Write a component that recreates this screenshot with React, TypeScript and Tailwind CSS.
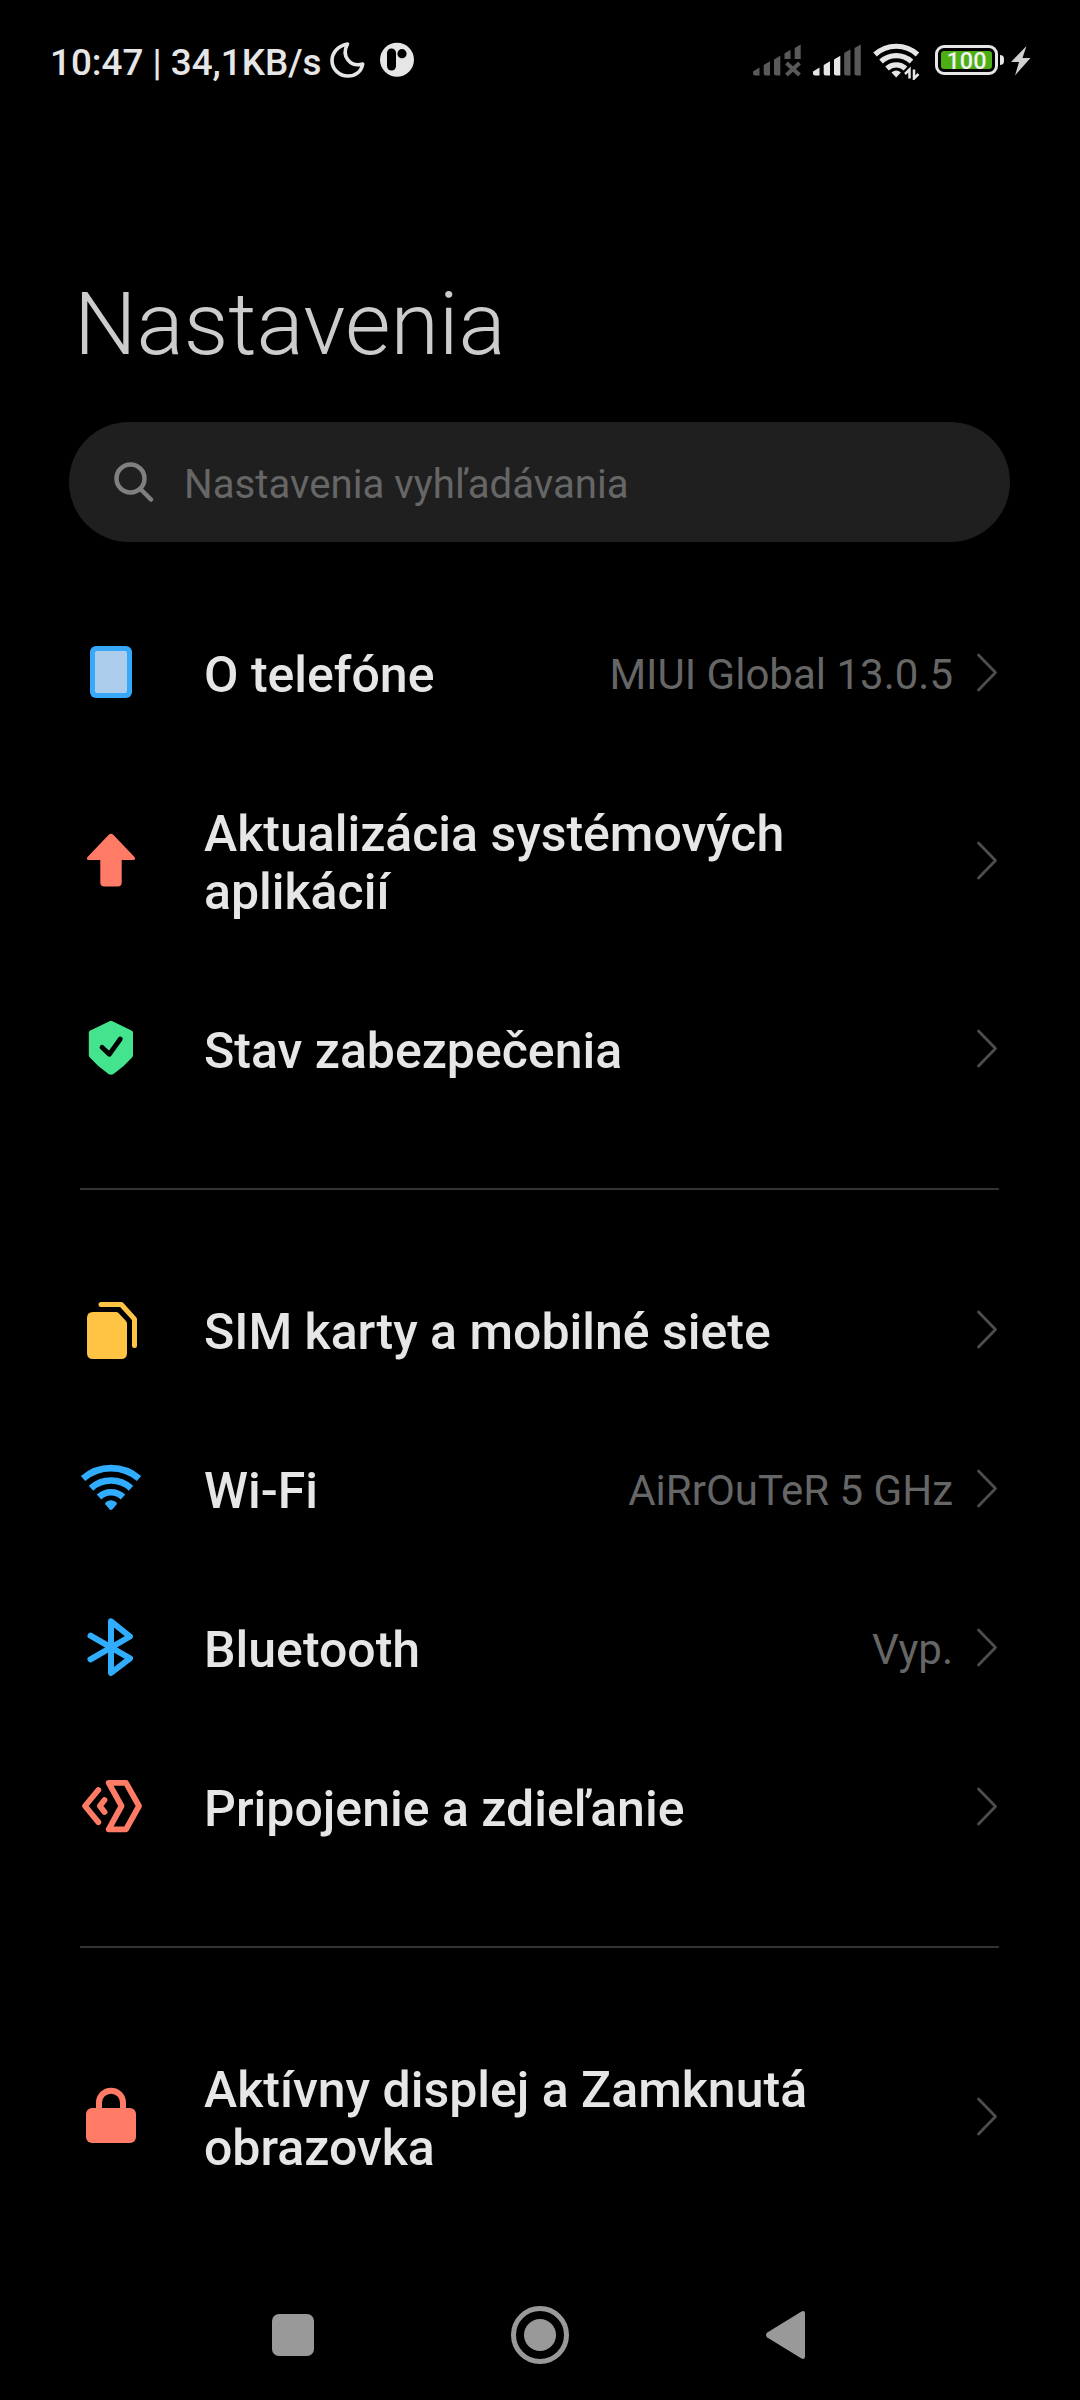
import type { ReactNode } from "react";

type Item = {
  label: ReactNode;
  value?: string;
  icon: ReactNode;
};

function RowIcon({ children, top = 0 }: { children: ReactNode; top?: number }) {
  return (
    <svg width="64" height="63" viewBox={`0 ${-top} 64 63`} fill="none" className="shrink-0">
      {children}
    </svg>
  );
}

const PhoneIcon = () => (
  <RowIcon>
    <rect x="11" y="5" width="42" height="52" rx="6" fill="#37a9f8" />
    <rect x="16" y="10" width="32" height="42" rx="2" fill="#adcdec" />
  </RowIcon>
);

const UpdateIcon = () => (
  <RowIcon>
    <path
      d="M30 5.6q2-1.8 4 0L55.5 28q1.800 2.800-1.300 3H42.700V53.500q0 4-4 4H25.300q-4 0-4-4V31H9.800q-3.100-.2-1.300-3z"
      fill="#ff7b66"
    />
  </RowIcon>
);

const ShieldIcon = () => (
  <RowIcon>
    <path
      d="M30.500 4.200q1.500-.8 3 0L53 13.800q1 .5 1 1.700V38q0 1.600-1 2.600Q45 50 34.500 57q-2.500 1.600-5 0Q19 50 10.800 40.600q-1-1-1-2.600V15.500q0-1.200 1-1.700z"
      fill="#44e48e"
    />
    <path
      d="M23 30.300l7.300 7L41.300 22"
      stroke="#000"
      strokeWidth="4.800"
      strokeLinecap="round"
      strokeLinejoin="round"
    />
  </RowIcon>
);

const SimIcon = () => (
  <RowIcon top={1}>
    <path d="M14 13H37q1.500 0 2.500 1l7.500 8q1 1 1 2.500V54q0 6-6 6H14q-6 0-6-6V19q0-6 6-6z" fill="#ffc443" />
    <path
      d="M22 5.500H42.300L55.500 20.200V46.500"
      stroke="#ffc443"
      strokeWidth="5"
      strokeLinecap="round"
      strokeLinejoin="round"
    />
  </RowIcon>
);

const WifiIcon = () => (
  <RowIcon top={1}>
    <g stroke="#30adff" strokeWidth="6.600">
      <path d="M4 20.600a42.700 42.700 0 0 1 56 0" />
      <path d="M12 30.200a30 30 0 0 1 40 0" />
      <path d="M20 39a17.500 17.500 0 0 1 24 0" />
    </g>
    <path d="M26.500 46.500q-1-1.500.5-2.600 5-3.400 10 0 1.500 1.100.5 2.600l-4 4.700q-1.500 1.400-3 0z" fill="#30adff" />
  </RowIcon>
);

const BluetoothIcon = () => (
  <RowIcon top={1}>
    <path
      d="M11.500 18.700L51 41.300 32 56V4.300L51 19.500 11.500 42.300"
      stroke="#30adff"
      strokeWidth="6"
      strokeLinecap="round"
      strokeLinejoin="round"
    />
  </RowIcon>
);

const ShareIcon = () => (
  <RowIcon top={1}>
    <g stroke="#ff7b66" strokeWidth="5.800" strokeLinecap="round" strokeLinejoin="round">
      <path d="M19.300 14L6 30l13.300 16.200" />
      <path d="M25.500 24L20.800 30l4.700 6" />
      <path d="M29.700 6.800H47L60 30 47 53.300H29.700L42.500 30z" />
    </g>
  </RowIcon>
);

const LockIcon = () => (
  <RowIcon top={2}>
    <rect x="7" y="21" width="50" height="35" rx="6" fill="#ff7b66" />
    <path d="M20 23V15.700a12 12 0 0 1 24 0V23" stroke="#ff7b66" strokeWidth="6" />
  </RowIcon>
);

const sections: Item[][] = [
  [
    { label: "O telefóne", value: "MIUI Global 13.0.5", icon: <PhoneIcon /> },
    {
      label: (
        <>
          Aktualizácia systémových
          <br />
          aplikácií
        </>
      ),
      icon: <UpdateIcon />,
    },
    { label: "Stav zabezpečenia", icon: <ShieldIcon /> },
  ],
  [
    { label: "SIM karty a mobilné siete", icon: <SimIcon /> },
    { label: "Wi-Fi", value: "AiRrOuTeR 5 GHz", icon: <WifiIcon /> },
    { label: "Bluetooth", value: "Vyp.", icon: <BluetoothIcon /> },
    { label: "Pripojenie a zdieľanie", icon: <ShareIcon /> },
  ],
  [
    {
      label: (
        <>
          Aktívny displej a Zamknutá
          <br />
          obrazovka
        </>
      ),
      icon: <LockIcon />,
    },
  ],
];

function Row({ label, value, icon }: Item) {
  return (
    <div className="flex items-center py-12 pr-[82px] pl-[79px]">
      {icon}
      <div className="ml-[61px] flex-1 pt-[5px] text-[50px] leading-[58px] font-medium whitespace-nowrap text-[#e6e6e6]">
        {label}
      </div>
      {value && <div className="pt-[5px] text-[42px] leading-[50px] whitespace-nowrap text-[#666]">{value}</div>}
      <svg width="22" height="39" viewBox="0 0 22 39" fill="none" className="ml-[23px] shrink-0">
        <path
          d="M2.500 2L19.500 19.500 2.500 37"
          stroke="#4d4d4d"
          strokeWidth="2.800"
          strokeLinecap="round"
          strokeLinejoin="round"
        />
      </svg>
    </div>
  );
}

function StatusBar() {
  return (
    <div className="flex h-[120px] items-center pr-[49px] pl-[50px] text-[#e6e6e6]">
      <span className="w-[280px] pt-1.5 text-[36.800px] leading-10 font-medium whitespace-nowrap">10:47 | 34,1KB/s</span>
      {/* do not disturb */}
      <svg width="35" height="40" viewBox="0 0 35 40" fill="none">
        <path
          d="M17.500 4C8 6 2 12.500 2 20.500 2 29.500 9.500 36 18 36 25.500 36 31.500 31.500 32.700 24 21 27.500 10.500 17 17.500 4Z"
          stroke="currentColor"
          strokeWidth="3.600"
          strokeLinejoin="round"
        />
      </svg>
      <svg width="34" height="40" viewBox="0 0 34 40" className="ml-[15px]">
        <circle cx="17" cy="19.700" r="17" fill="currentColor" />
        <rect x="7" y="8.500" width="9" height="22" rx="4.500" />
        <circle cx="22" cy="13.700" r="4.600" />
      </svg>

      {/* SIM 1, no service */}
      <svg width="48" height="40" viewBox="0 0 48 40" className="ml-auto" fill="#595959">
        <path d="M0 31.500l6.500-4V35.500H2q-2 0-2-2z" />
        <path d="M10.700 25l6.300-3.800V35.500h-4.300q-2 0-2-2z" />
        <path d="M21 19.500l6.300-3.800V35.500H23q-2 0-2-2z" />
        <path d="M31.500 13.500l6-3.800V19h-6z" />
        <path d="M41.700 8l6-3.500V19h-6z" />
        <path d="M33.500 23l13 12M46.500 23l-13 12" stroke="#595959" strokeWidth="4" />
      </svg>
      <svg width="48" height="40" viewBox="0 0 48 40" className="ml-3" fill="currentColor">
        <path d="M0 31.500l6.500-4V35.500H2q-2 0-2-2z" />
        <path d="M10.700 25l6.300-3.800V35.500h-4.300q-2 0-2-2z" />
        <path d="M21 19.500l6.300-3.800V35.500H23q-2 0-2-2z" />
        <path d="M31.200 13l6.300-3.800V35.500h-4.300q-2 0-2-2z" fill="#595959" />
        <path d="M41.500 8l6.300-3.500V35.500h-4.300q-2 0-2-2z" fill="#595959" />
      </svg>
      <svg width="47" height="40" viewBox="0 0 47 40" className="ml-3" fill="none">
        <g stroke="currentColor" strokeWidth="5.200">
          <path d="M2 14.500a31.500 31.500 0 0 1 42.500 0" />
          <path d="M8 21.500a22.500 22.500 0 0 1 30.500 0" />
          <path d="M14 28.500a13.500 13.500 0 0 1 18.500 0" />
        </g>
        <path d="M18.500 32.500q4.700-4 9.400 0l-4.700 5z" fill="currentColor" />
        <path d="M36.500 38.500V29.500l-4.500 4.500M41 29.500v9l4.500-4.500" stroke="currentColor" strokeWidth="2.500" />
      </svg>
      <div className="ml-[15px] flex h-[30px] w-[63px] rounded-[9px] border-[3px] border-[#e6e6e6] p-[3px]">
        <span className="flex flex-1 items-center justify-center rounded-[3px] bg-[#4caf16] pt-[3px] text-[23.500px] leading-none font-medium text-[#f2f2f2]">
          100
        </span>
      </div>
      <div className="ml-0.5 h-2.5 w-1 rounded-r-sm bg-[#e6e6e6]" />
      <svg width="20" height="40" viewBox="0 0 20 40" className="ml-[7px]" fill="#d0d0d0">
        <path d="M15.500 6L0 22h8L4 35.500 19.500 18h-8z" />
      </svg>
    </div>
  );
}

function NavBar() {
  return (
    <div className="flex h-[130px] shrink-0 items-center pl-[272px]">
      <div className="h-[42px] w-[42px] rounded-[7px] bg-[#999]" />
      <div className="ml-[197px] flex h-[58px] w-[58px] items-center justify-center rounded-full border-[5px] border-[#999]">
        <div className="h-8 w-8 rounded-full bg-[#999]" />
      </div>
      <svg width="40" height="50" viewBox="0 0 40 50" className="ml-[197px]" fill="#999">
        <path d="M1.300 27.500q-2.600-2.500 0-5L35.500 1.500q3.500-1.500 3.500 2V46.500q0 3.500-3.500 2z" />
      </svg>
    </div>
  );
}

export default function App() {
  return (
    <div className="flex h-[2400px] w-[1080px] flex-col overflow-hidden bg-black font-[Roboto,sans-serif]">
      <StatusBar />
      <h1 className="mt-[152px] pl-[74px] text-[88px] leading-[104px] font-light text-[#ccc]">Nastavenia</h1>
      <div className="mt-[46px] mr-[70px] ml-[69px] flex h-[120px] shrink-0 items-center rounded-full bg-[#1f1f1f] pl-[45px]">
        <svg width="40" height="42" viewBox="0 0 40 42" fill="none" stroke="#808080" strokeWidth="4.500">
          <circle cx="16.500" cy="17.500" r="14" />
          <path d="M26.500 28L37 38.500" strokeLinecap="round" />
        </svg>
        <span className="ml-[30px] pt-1.5 text-[40.200px] leading-[48px] text-[#666]">Nastavenia vyhľadávania</span>
      </div>
      <div className="flex-1 pt-[51px]">
        {sections.map((items, i) => (
          <div key={i}>
            {i > 0 && <div className="my-[60px] mr-[81px] ml-20 h-0.5 bg-[#333]" />}
            {items.map((item, j) => (
              <Row key={j} {...item} />
            ))}
          </div>
        ))}
      </div>
      <NavBar />
    </div>
  );
}
